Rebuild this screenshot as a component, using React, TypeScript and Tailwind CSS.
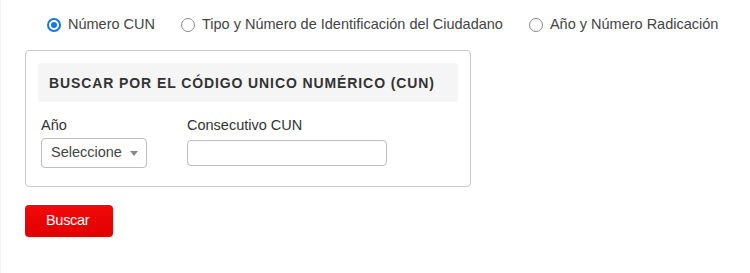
const font = { fontFamily: '"Liberation Sans", Arial, sans-serif' };

function Radio({ label, checked = false }: { label: string; checked?: boolean }) {
  return (
    <label className="flex items-center gap-[7px] text-[14.5px] text-[#444]">
      {checked ? (
        <span className="w-[14px] h-[14px] rounded-full bg-[#1a73e8] flex items-center justify-center">
          <span className="w-[10px] h-[10px] rounded-full border-[2px] border-white bg-[#1a73e8]"></span>
        </span>
      ) : (
        <span className="w-[14px] h-[14px] rounded-full border border-[#8a8a8a] bg-white"></span>
      )}
      <span>{label}</span>
    </label>
  );
}

export default function App() {
  return (
    <div className="w-[750px] h-[273px] bg-white border-l border-[#f3f3f3]" style={font}>
      {/* Tipo de búsqueda */}
      <div className="flex items-center gap-[26px] pl-[46px] pt-[17px] h-[33px]">
        <Radio label="Número CUN" checked />
        <Radio label="Tipo y Número de Identificación del Ciudadano" />
        <Radio label="Año y Número Radicación" />
      </div>

      {/* Panel CUN */}
      <div className="ml-[24px] mt-[17px] w-[446px] h-[137px] border border-[#c8c8c8] rounded-[4px] px-[12px] pt-[12px]">
        <div className="h-[39px] bg-[#f5f5f5] rounded-[4px] flex items-center px-[11px]">
          <h3 className="text-[14px] font-bold text-[#333] tracking-[0.9px] pt-[1px]">
            BUSCAR POR EL CÓDIGO UNICO NUMÉRICO (CUN)
          </h3>
        </div>
        <div className="flex gap-[40px] pl-[3px] pt-[13px]">
          <div className="flex flex-col">
            <span className="text-[14.5px] text-[#333] leading-[20px]">Año</span>
            <div className="mt-[3px] w-[106px] h-[30px] border border-[#bdbdbd] rounded-[4px] flex items-center justify-between pl-[9px] pr-[8px]">
              <span className="text-[14.5px] text-[#444]">Seleccione</span>
              <svg width="8" height="5" viewBox="0 0 8 5"><path d="M0 0h8L4 5z" fill="#888" /></svg>
            </div>
          </div>
          <div className="flex flex-col">
            <span className="text-[14.5px] text-[#333] leading-[20px]">Consecutivo CUN</span>
            <input className="mt-[5px] w-[200px] h-[26px] border border-[#bdbdbd] rounded-[4px] outline-none" />
          </div>
        </div>
      </div>

      <button className="ml-[24px] mt-[18px] w-[88px] h-[32px] rounded-[4px] bg-gradient-to-b from-[#f20a0a] to-[#e00000] text-white text-[14.5px] tracking-[-0.3px] flex items-center pl-[21px]">
        Buscar
      </button>
    </div>
  );
}
